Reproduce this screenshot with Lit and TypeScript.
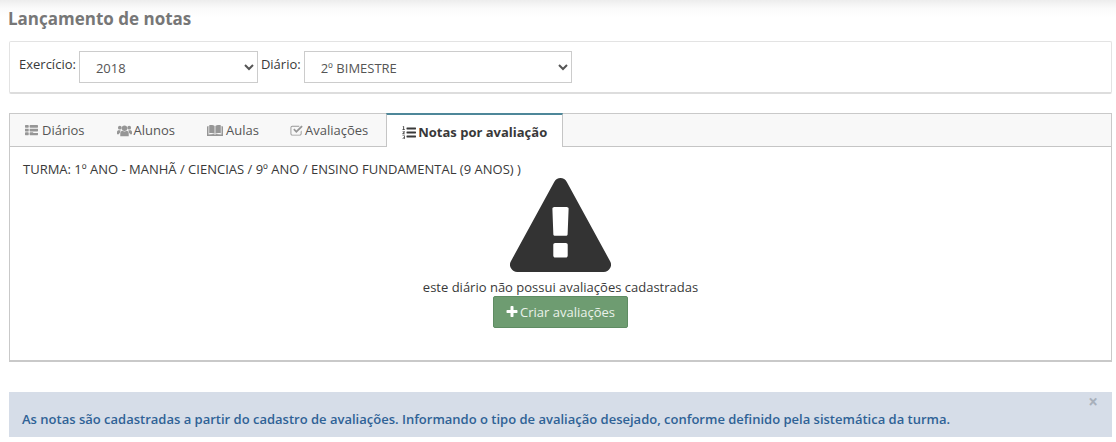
import { LitElement, html, css, svg } from "lit";
import { customElement } from "lit/decorators.js";

const ic = (w: number, h: number, vb: string, body: unknown, cls = "ic") =>
  html`<svg class=${cls} width=${w} height=${h} viewBox=${vb} aria-hidden="true">${body}</svg>`;

const thList = svg`<path d="M512 1248v192q0 40-28 68t-68 28h-320q-40 0-68-28t-28-68v-192q0-40 28-68t68-28h320q40 0 68 28t28 68zm0-512v192q0 40-28 68t-68 28h-320q-40 0-68-28t-28-68v-192q0-40 28-68t68-28h320q40 0 68 28t28 68zm1280 512v192q0 40-28 68t-68 28h-960q-40 0-68-28t-28-68v-192q0-40 28-68t68-28h320q40 0 68 28t28 68zm-1280-1024v192q0 40-28 68t-68 28h-320q-40 0-68-28t-28-68v-192q0-40 28-68t68-28h320q40 0 68 28t28 68zm1280 512v192q0 40-28 68t-68 28h-960q-40 0-68-28t-28-68v-192q0-40 28-68t68-28h960q40 0 68 28t28 68zm0-512v192q0 40-28 68t-68 28h-960q-40 0-68-28t-28-68v-192q0-40 28-68t68-28h960q40 0 68 28t28 68z"/>`;
const users = svg`<circle cx="3" cy="3" r="2"/><circle cx="13" cy="3" r="2"/><circle cx="8" cy="3.600" r="2.900"/><path d="M0 10V7.600C0 6.300.9 5.600 2 5.600h1.800c-.3.900-.1 2-.7 2.700-.7.600-1 1.100-1 1.700zM16 10V7.600c0-1.300-.9-2-2-2h-1.800c.3.900.1 2 .7 2.700.7.600 1 1.100 1 1.700z"/><path d="M3.500 12V9c0-1.600 1.100-2.700 2.400-2.700.6.500 1.300.8 2.100.8s1.500-.3 2.100-.8c1.300 0 2.400 1.100 2.400 2.700v3z"/>`;
const book = svg`<path d="M0 2.500 1.500 2v8.500l5.500-.5 1 .8 1-.8 5.500.5V2l1.500.5V12H0z"/><path d="M2.200 1.200C4 .7 6.400.9 7.600 2v7.800C6.400 8.900 4 8.800 2.200 9.300zM13.800 1.200C12 .7 9.600.9 8.400 2v7.800c1.200-.9 3.600-1 5.400-.5z"/>`;
const check = svg`<path d="M2.500 2h7.500v1H2.500C2 3 1.500 3.400 1.500 4v6.500c0 .6.500 1 1 1h8c.6 0 1-.4 1-1V8l1-1v3.500c0 1.100-.9 2-2 2h-8c-1.100 0-2-.9-2-2V4c0-1.100.9-2 2-2z"/><path d="m3.500 6.200 1.300-1.300 2 2L12.300 1.500 13.700 2.900 6.800 9.700z"/>`;
const listOl = svg`<rect x="4.500" y="1.500" width="9.500" height="2" rx=".4"/><rect x="4.500" y="5.500" width="9.500" height="2" rx=".4"/><rect x="4.500" y="9.500" width="9.500" height="2" rx=".4"/><path d="M1 .3h1.100v3h.8v.6H.4v-.6h.8V1.100H.6zM.5 5.200h2.300v1.100L1.500 7.600h1.400v.6H.4v-.8l1.500-1.600h-1.400zM.5 9.500h2.400v2.900l-.4.600H.4v-.6h1.700v-.6H1v-.6h1.100V10.100H.5z" opacity=".95"/>`;
const plus = svg`<path d="M1600 736v192q0 40-28 68t-68 28h-416v416q0 40-28 68t-68 28h-192q-40 0-68-28t-28-68v-416h-416q-40 0-68-28t-28-68v-192q0-40 28-68t68-28h416v-416q0-40 28-68t68-28h192q40 0 68 28t28 68v416h416q40 0 68 28t28 68z"/>`;
const warn = svg`<path d="M1024 1375v-190q0-14-9.500-23.500t-22.500-9.500h-192q-13 0-22.500 9.500t-9.500 23.500v190q0 14 9.500 23.500t22.500 9.500h192q13 0 22.500-9.500t9.500-23.500zm-2-374l18-459q0-12-10-19-13-11-24-11h-220q-11 0-24 11-10 7-10 21l17 457q0 10 10 16.500t24 6.500h185q14 0 23.500-6.500t10.500-16.500zm-14-934l768 1408q35 63-2 126-17 29-46.500 46t-63.500 17h-1536q-34 0-63.500-17t-46.500-46q-37-63-2-126l768-1408q17-31 47-49t65-18 65 18 47 49z"/>`;

@customElement("app-root")
export class AppRoot extends LitElement {
  static styles = css`
    :host {
      display: block;
      height: 442px;
      overflow: hidden;
      box-sizing: border-box;
      padding: 0 4px 0 9px;
      font-family: "Open Sans", sans-serif;
      font-size: 13px;
      line-height: 18px;
      color: #393939;
      background: linear-gradient(#ededed 0, #fafafa 8px, #fff 18px);
    }
    h1 {
      margin: 0 0 0 -1px;
      padding-top: 9px;
      height: 41px;
      box-sizing: border-box;
      font-size: 17px;
      line-height: 20px;
      font-weight: 700;
      color: #777;
    }
    .filters {
      display: flex;
      height: 53px;
      box-sizing: border-box;
      border: 1px solid #e3e3e3;
      border-bottom: 2px solid #ddd;
      border-radius: 2px;
      padding: 9px 9px 0;
      background: #fff;
    }
    .filters label {
      margin-top: 4px;
      margin-right: 3px;
    }
    select {
      height: 32px;
      box-sizing: border-box;
      border: 1px solid #ccc;
      border-radius: 0;
      background: #fff;
      color: #555;
      font: 13px "Open Sans", sans-serif;
      padding: 2px 12px 0;
      margin-right: 3px;
    }
    .year { width: 179px; }
    .diary { width: 268px; }
    .panel {
      margin-top: 19px;
      height: 249px;
      box-sizing: border-box;
      border: 1px solid #c9c9c9;
      border-bottom-width: 2px;
      display: flex;
      flex-direction: column;
    }
    .tabs {
      display: flex;
      height: 32px;
      flex: none;
      background: #f8f8f8;
      border-bottom: 1px solid #c5c5c5;
    }
    .tab {
      display: flex;
      align-items: center;
      padding: 0 15px;
      margin-right: 2px;
      color: #555;
    }
    .g2 { gap: 2px; }
    .g3 { gap: 3px; }
    .g4 { gap: 4px; }
    .tab.pull { padding-left: 14px; margin-right: 3px; }
    .tab .ic { fill: #969696; }
    .tab.active {
      margin-bottom: -1px;
      margin-top: -1px;
      height: 34px;
      box-sizing: border-box;
      padding: 2px 15px 0;
      background: #fff;
      border-top: 2px solid #4e8799;
      border-left: 1px solid #c5c5c5;
      border-right: 1px solid #c5c5c5;
      font-weight: 700;
      color: #393939;
    }
    .tab.active .ic { fill: #393939; }
    .content {
      padding: 13px 13px 0;
      flex: 1;
      display: flex;
      flex-direction: column;
    }
    .empty {
      display: flex;
      flex-direction: column;
      align-items: center;
    }
    .warn { fill: #333; display: block; }
    .msg { margin-top: 6px; }
    .btn {
      display: flex;
      align-items: center;
      justify-content: center;
      gap: 2px;
      width: 135px;
      height: 32px;
      box-sizing: border-box;
      background: #6e9c71;
      border: 1px solid #5f8c63;
      border-radius: 2px;
      color: #eaf2ea;
      font: 13px "Open Sans", sans-serif;
    }
    .btn .ic { fill: #fff; }
    .alert {
      margin-top: 30px;
      height: 45px;
      box-sizing: border-box;
      background: #d6dde8;
      color: #2f6296;
      font-weight: 600;
      padding: 18px 13px 0;
      position: relative;
    }
    .close {
      position: absolute;
      right: 14px;
      top: 1px;
      font-size: 17px;
      line-height: 18px;
      font-weight: 700;
      color: #a8b0bb;
    }
  `;

  render() {
    return html`
      <h1>Lançamento de notas</h1>
      <div class="filters">
        <label>Exercício:</label>
        <select class="year"><option>2018</option></select>
        <label>Diário:</label>
        <select class="diary"><option>2º BIMESTRE</option></select>
      </div>
      <div class="panel">
        <div class="tabs">
          <div class="tab g4">${ic(13, 13, "0 0 1792 1792", thList)}Diários</div>
          <div class="tab g2">${ic(15, 13, "0 0 16 12", users)}Alunos</div>
          <div class="tab g3">${ic(16, 13, "0 0 16 13", book)}Aulas</div>
          <div class="tab g2 pull">${ic(13, 13, "0 0 14 14", check)}Avaliações</div>
          <div class="tab g2 active">${ic(14, 13, "0 0 14 13", listOl)}Notas por avaliação</div>
        </div>
        <div class="content">
          <div>TURMA: 1º ANO - MANHÃ / CIENCIAS / 9º ANO / ENSINO FUNDAMENTAL (9 ANOS) )</div>
          <div class="empty">
            ${ic(101, 94, "0 0 1792 1664", warn, "warn")}
            <div class="msg">este diário não possui avaliações cadastradas</div>
            <button class="btn">${ic(12, 12, "128 128 1536 1536", plus)}Criar avaliações</button>
          </div>
        </div>
      </div>
      <div class="alert">
        <span class="close">×</span>
        As notas são cadastradas a partir do cadastro de avaliações. Informando o tipo de avaliação desejado, conforme definido pela sistemática da turma.
      </div>
    `;
  }
}
